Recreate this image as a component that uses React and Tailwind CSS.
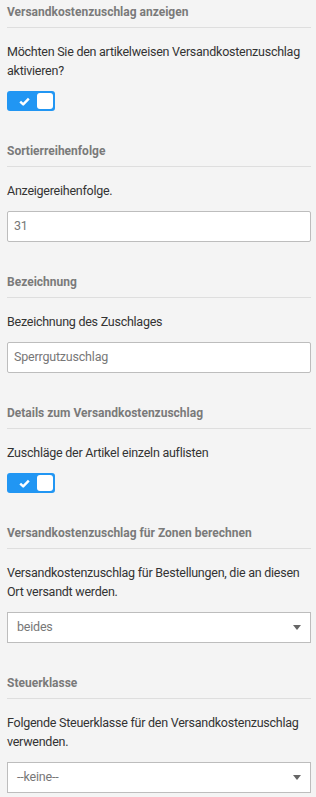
import React, { useState } from 'react';

const Heading = ({ children }) => (
  <div className="pb-[7px] border-b border-[#dedede] text-[12px] leading-[16px] font-bold text-[#7a7a7a]">
    {children}
  </div>
);

const Label = ({ children }) => (
  <p className="mt-[14px] mb-[11px] text-[12.5px] tracking-[-0.25px] leading-[19px] text-[#333]">{children}</p>
);

const Toggle = ({ on, onChange }) => (
  <button
    onClick={() => onChange(!on)}
    className="flex items-center justify-between w-[48px] h-[20px] rounded-[3px] bg-[#2196f3] pl-[12px] pr-[2px]"
  >
    <svg width="11" height="9" viewBox="0 0 11 9">
      <path d="M1.2 4.6 L4.2 7.4 L9.8 1.6" fill="none" stroke="#fff" strokeWidth="2.4" strokeLinejoin="round" />
    </svg>
    <span className="w-[16px] h-[16px] rounded-[3px] bg-white" />
  </button>
);

const TextInput = ({ value }) => (
  <div className="h-[31px] flex items-center px-[6px] bg-white border border-[#bdbdbd] rounded-[2px] text-[12.5px] tracking-[-0.2px] text-[#777]">
    {value}
  </div>
);

const Select = ({ value }) => (
  <div className="h-[31px] flex items-center justify-between pl-[9px] pr-[9px] bg-white border border-[#bdbdbd] text-[12.5px] tracking-[-0.2px] text-[#777]">
    <span>{value}</span>
    <svg width="8" height="5" viewBox="0 0 8 5">
      <path d="M0 0 H8 L4 5 Z" fill="#666" />
    </svg>
  </div>
);

const Section = ({ title, first, children }) => (
  <section className={first ? 'pt-[4px]' : 'pt-[32px]'}>
    <Heading>{title}</Heading>
    {children}
  </section>
);

export default function App() {
  const [showCharge, setShowCharge] = useState(true);
  const [listItems, setListItems] = useState(true);

  return (
    <div className="min-h-[797px] bg-[#f4f4f4] pl-[7px] pr-[5px] font-['Roboto',sans-serif]">
      <Section title="Versandkostenzuschlag anzeigen" first>
        <Label>Möchten Sie den artikelweisen Versandkostenzuschlag aktivieren?</Label>
        <Toggle on={showCharge} onChange={setShowCharge} />
      </Section>

      <Section title="Sortierreihenfolge">
        <Label>Anzeigereihenfolge.</Label>
        <TextInput value="31" />
      </Section>

      <Section title="Bezeichnung">
        <Label>Bezeichnung des Zuschlages</Label>
        <TextInput value="Sperrgutzuschlag" />
      </Section>

      <Section title="Details zum Versandkostenzuschlag">
        <Label>Zuschläge der Artikel einzeln auflisten</Label>
        <Toggle on={listItems} onChange={setListItems} />
      </Section>

      <Section title="Versandkostenzuschlag für Zonen berechnen">
        <Label>Versandkostenzuschlag für Bestellungen, die an diesen Ort versandt werden.</Label>
        <Select value="beides" />
      </Section>

      <Section title="Steuerklasse">
        <Label>Folgende Steuerklasse für den Versandkostenzuschlag verwenden.</Label>
        <Select value="--keine--" />
      </Section>
    </div>
  );
}
